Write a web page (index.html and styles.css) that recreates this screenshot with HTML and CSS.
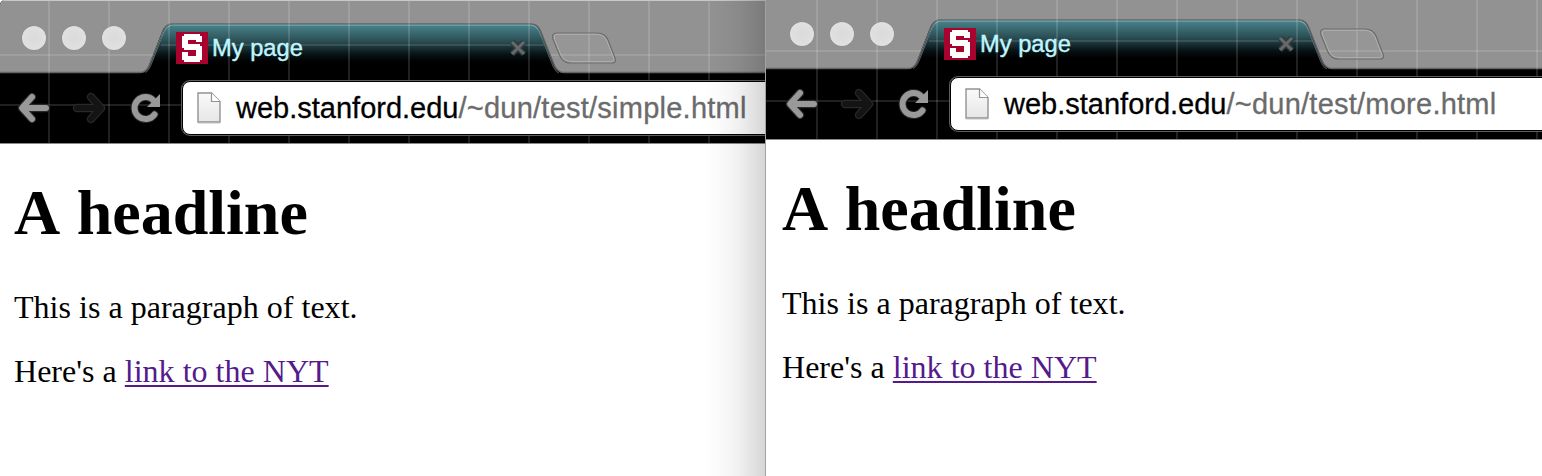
FILE: index.html
```html
<!DOCTYPE html>
<html lang="en">
<head>
<meta charset="utf-8">
<title>My page</title>
<link rel="stylesheet" href="styles.css">
</head>
<body>
<svg width="0" height="0" class="defs" aria-hidden="true">
  <defs>
    <linearGradient id="teal" x1="0" y1="24" x2="0" y2="62" gradientUnits="userSpaceOnUse">
      <stop offset="0" stop-color="#4b858d"/><stop offset=".45" stop-color="#2a4f55"/><stop offset=".8" stop-color="#081316"/><stop offset="1" stop-color="#000"/>
    </linearGradient>
    <linearGradient id="rim" x1="0" y1="24" x2="0" y2="74" gradientUnits="userSpaceOnUse">
      <stop offset="0" stop-color="#83bdc8"/><stop offset=".3" stop-color="#55747a"/><stop offset="1" stop-color="#444"/>
    </linearGradient>
    <linearGradient id="paper" x1="0" y1="0" x2="0" y2="1"><stop offset="0" stop-color="#fafafa"/><stop offset="1" stop-color="#e6e6e6"/></linearGradient>
    <pattern id="cols" x="48" y="0" width="60" height="150" patternUnits="userSpaceOnUse"><rect width="2" height="150" fill="#fff" fill-opacity=".13"/></pattern>
    <symbol id="frame" viewBox="-3 0 843 144">
      <rect x="-10" width="850" height="144"/>
      <path d="M-10 0H840V73H564Q558 73 555 66L541 32Q538 24 531 24H172Q165 24 162 32L149 65Q146 73 140 73H-10Z" fill="#929292"/>
      <path d="M-10 55H153M551 55H840" stroke="#9f9f9f" stroke-width="2"/>
      <path d="M146 74Q149 72 151 66L164 33Q167 25 173 25H530Q537 25 540 33L553 66Q556 72 560 74Z" fill="url(#teal)"/>
      <path d="M161 45H545" stroke="#fff" stroke-opacity=".11" stroke-width="2"/>
      <path d="M-10 105H182" stroke="#202020" stroke-width="2"/>
      <path d="M-10 72.5H139Q146 73 149 66L162.3 33Q165 24 172 24H531Q538 24 541 32L554.5 66Q558 72.5 564 72.5H840" fill="none" stroke="#646464" stroke-width="1.4"/>
      <path d="M145 72.5Q148 71 150.5 66L163.5 33Q166.500 25 173 25H530Q537 25 540 33L553 66Q556 72 559 73" fill="none" stroke="url(#rim)" stroke-width="1.2"/>
      <rect x="-10" width="850" height="143" fill="url(#cols)"/>
      <path d="M-10 .5H840" stroke="#c6cbc6"/>
      <path d="M-10 143.5H840" stroke="#8a8a8a"/>
    </symbol>
    <symbol id="stanford" viewBox="0 0 16 16"><path fill="#a8022f" d="M0 0h16v16H0z"/><path fill="#fff" d="M4 1H12V2H13V5H10V4H6V6H12V7H13V14H12V15H4V14H3V10H6V12H10V9H4V8H3V2H4Z"/></symbol>
    <symbol id="close" viewBox="0 0 20 20"><path d="M4 4l12 12M16 4L4 16" stroke="#2d3c3f" stroke-width="6"/><path d="M4 4l12 12M16 4L4 16" stroke="#696969" stroke-width="3"/></symbol>
    <symbol id="newtab" viewBox="0 0 66 34"><path d="M6 2H46Q54 2 57 9L64 27Q66 32 61 32H20Q12 32 9 25L2 8Q0 2 6 2Z" fill="#fff" fill-opacity=".04" stroke="#6b6b6b" stroke-width="1.2"/><path d="M6 3.3H46Q53 3.3 56 10L62.6 27Q64 30.7 60 30.7H21Q13 30.7 10 24L3.4 8Q2.500 3.3 6 3.3Z" fill="none" stroke="#b0b0b0"/></symbol>
    <symbol id="arrow" viewBox="0 0 34 34"><g fill="none" stroke-linecap="round" stroke-linejoin="round"><path class="edge" d="M15 6L5 17L15 28M6 17H29" stroke-width="8.4"/><path d="M15 6L5 17L15 28M6 17H29" stroke-width="6"/></g></symbol>
    <symbol id="reload" viewBox="0 0 34 34"><path d="M25.500 23.500A11 11 0 1 1 24.500 9.500" fill="none" stroke="#242424" stroke-width="8" stroke-linecap="round"/><path d="M25.500 23.500A11 11 0 1 1 24.500 9.500" fill="none" stroke="#999" stroke-width="6" stroke-linecap="round"/><path d="M31 3V16H18Z" fill="#999"/></symbol>
    <symbol id="doc" viewBox="0 0 24 32"><path d="M1 1H14.500L23 9.500V30H1Z" fill="url(#paper)" stroke="#929292" stroke-width="1.4"/><path d="M14.500 1V9.500H23" fill="#fff" stroke="#929292" stroke-width="1.2"/><path d="M1 31.400H23" stroke="#ddd"/></symbol>
  </defs>
</svg>

<main class="desktop">
  <section class="window window-back">
    <header class="chrome">
      <svg class="frame" width="843" height="144"><use href="#frame"/></svg>
      <div class="tabstrip">
        <div class="lights"><i></i><i></i><i></i></div>
        <div class="tab"><svg width="32" height="32"><use href="#stanford"/></svg><span class="title">My page</span><svg class="close" width="20" height="20"><use href="#close"/></svg></div>
        <svg class="newtab" width="66" height="34"><use href="#newtab"/></svg>
      </div>
      <div class="toolbar">
        <svg class="back" width="34" height="34"><use href="#arrow"/></svg>
        <svg class="forward" width="34" height="34"><use href="#arrow"/></svg>
        <svg class="reload" width="34" height="34"><use href="#reload"/></svg>
        <div class="omnibox"><svg width="24" height="32"><use href="#doc"/></svg><span class="host">web.stanford.edu</span><span class="path">/~dun/test/simple.html</span></div>
      </div>
    </header>
    <article class="page">
      <h1>A headline</h1>
      <p>This is a paragraph of text.</p>
      <p>Here's a <a href="#">link to the NYT</a></p>
    </article>
    <div class="shade"></div>
  </section>

  <section class="window window-front">
    <header class="chrome">
      <svg class="frame" width="843" height="144"><use href="#frame"/></svg>
      <div class="tabstrip">
        <div class="lights"><i></i><i></i><i></i></div>
        <div class="tab"><svg width="32" height="32"><use href="#stanford"/></svg><span class="title">My page</span><svg class="close" width="20" height="20"><use href="#close"/></svg></div>
        <svg class="newtab" width="66" height="34"><use href="#newtab"/></svg>
      </div>
      <div class="toolbar">
        <svg class="back" width="34" height="34"><use href="#arrow"/></svg>
        <svg class="forward" width="34" height="34"><use href="#arrow"/></svg>
        <svg class="reload" width="34" height="34"><use href="#reload"/></svg>
        <div class="omnibox"><svg width="24" height="32"><use href="#doc"/></svg><span class="host">web.stanford.edu</span><span class="path">/~dun/test/more.html</span></div>
      </div>
    </header>
    <article class="page">
      <h1>A headline</h1>
      <p>This is a paragraph of text.</p>
      <p>Here's a <a href="#">link to the NYT</a></p>
    </article>
  </section>
</main>
</body>
</html>
```
FILE: styles.css
```css
* { box-sizing: border-box; }
body { margin: 0; background: #fff; overflow: hidden; }
svg { display: block; flex: none; overflow: visible; }
.defs { position: absolute; }
.desktop { display: flex; height: 476px; overflow: hidden; }
.window { position: relative; flex: none; height: 480px; background: #fff; overflow: hidden; }
.window-back { width: 765px; border-top-left-radius: 5px; }
.window-front { width: 777px; margin-top: -4px; padding-left: 2px; border-left: 1px solid #a2a2a2; }

.chrome { position: relative; height: 143px; width: 840px; }
/* the frame artwork starts 3px left of the content origin */
.frame { position: absolute; top: 0; left: -3px; }
.tabstrip { position: relative; display: flex; height: 74px; padding-left: 22px; }
.lights { display: flex; gap: 16px; width: 154px; padding-top: 26px; }
.lights i { width: 24px; height: 24px; border-radius: 50%; background: radial-gradient(#dadada, #e3e3e3); box-shadow: 0 0 1px #777; }
.tab { display: flex; align-items: center; width: 352px; height: 32px; margin-top: 32px; }
.title { margin-left: 4px; color: #bff6ff; font: 23.7px/32px "Liberation Sans", Arial, sans-serif; -webkit-text-stroke: .4px #bff6ff; }
.close { margin-left: auto; }
.newtab { margin: 31px 0 0 23px; }

.toolbar { position: relative; display: flex; align-items: center; height: 69px; padding: 0 0 1px 17px; }
.back { stroke: #999; }
.forward { margin-left: 21px; stroke: #141414; transform: scaleX(-1); }
.edge { stroke: #292929; }
.reload { margin-left: 23px; }
.omnibox { display: flex; align-items: center; width: 760px; height: 54px; margin-left: 19px; padding-left: 14px; flex: none; background: #fff; border: 1px solid #000; border-radius: 8px; box-shadow: 0 0 0 1px #606060; font: 29px/50px "Liberation Sans", Arial, sans-serif; white-space: nowrap; -webkit-text-stroke: .3px; }
.host { margin-left: 15px; color: #000; }
.path { color: #6b6b6b; letter-spacing: .24px; }

.page { position: relative; padding: 33px 14px 0; color: #000; font-family: "Liberation Serif", "Times New Roman", serif; }
.page h1 { margin: 0 0 39px; font-size: 64px; line-height: 74px; word-spacing: 4px; }
.page p { margin: 0 0 28px; font-size: 32px; line-height: 36px; letter-spacing: .02px; }
.page a { color: #551a8b; text-decoration-thickness: 2px; text-underline-offset: 3px; }
.shade { position: absolute; top: 0; right: 0; bottom: 0; width: 62px; background: linear-gradient(to right, transparent, rgba(0,0,0,.015) 25%, rgba(0,0,0,.06) 58%, rgba(0,0,0,.16)); }
```
